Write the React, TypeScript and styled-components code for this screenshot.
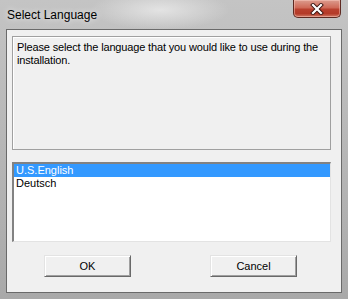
import React, { FC } from 'react';
import styled, { createGlobalStyle } from 'styled-components';

const Global = createGlobalStyle`
  *, *:before, *:after {
    box-sizing: border-box;
  }
  body {
    margin: 0;
    font-family: "Liberation Sans", Arial, sans-serif;
  }
`;

const Frame = styled.div`
  width: 348px;
  height: 299px;
  display: flex;
  flex-direction: column;
  background: linear-gradient(180deg, #c4c4c4 0%, #b9b9b9 40%, #a9a9a9 100%);
  position: relative;
  overflow: hidden;

  &:before {
    content: "";
    position: absolute;
    left: 90px;
    top: -10px;
    width: 140px;
    height: 40px;
    background: radial-gradient(ellipse at center, rgba(235, 235, 235, 0.8) 0%, rgba(235, 235, 235, 0) 70%);
  }
`;

const TitleBar = styled.div`
  height: 29px;
  display: flex;
  align-items: flex-start;
  justify-content: space-between;
  position: relative;
  z-index: 1;
`;

const Title = styled.div`
  font-family: "Liberation Sans", Arial, sans-serif;
  font-size: 12px;
  color: #000;
  padding: 8px 0 0 7px;
  text-shadow: 0 0 6px rgba(255, 255, 255, 0.9);
`;

const CloseButton = styled.div`
  width: 48px;
  height: 18px;
  margin-right: 7px;
  border: 1px solid #5e2a22;
  border-top: none;
  border-radius: 0 0 5px 5px;
  background: linear-gradient(180deg, #dc9c8e 0%, #cf6a58 45%, #b9402e 55%, #b43a28 80%, #d07a66 100%);
  box-shadow: inset 0 0 0 1px rgba(255, 210, 200, 0.45);
  display: flex;
  align-items: center;
  justify-content: center;
`;

const Client = styled.div`
  margin: 0 6px 0 6px;
  height: 264px;
  border: 1px solid #6a6a6a;
  background: #f0f0f0;
  display: flex;
  flex-direction: column;
  padding: 6px 10px 0 5px;
`;

const MessageBox = styled.div`
  height: 114px;
  border: 1px solid #a0a0a0;
  box-shadow: inset 1px 1px 0 #fff;
  background: #f0f0f0;
  padding: 4px 2px 0 4px;
  font-size: 11px;
  line-height: 13px;
  letter-spacing: -0.15px;
  color: #000;
`;

const ListBox = styled.div`
  margin-top: 12px;
  height: 80px;
  border: 1px solid #a0a0a0;
  border-top: 2px solid #828282;
  border-left: 2px solid #828282;
  border-right-color: #e3e3e3;
  border-bottom-color: #e3e3e3;
  background: #fff;
  display: flex;
  flex-direction: column;
`;

const ListItem = styled.div<{ $selected?: boolean }>`
  height: 13px;
  line-height: 13px;
  padding-left: 2px;
  font-size: 11px;
  color: ${p => (p.$selected ? '#fff' : '#000')};
  background: ${p => (p.$selected ? '#3399ff' : 'transparent')};
`;

const ButtonRow = styled.div`
  margin-top: 13px;
  display: flex;
  gap: 79px;
  padding-left: 32px;
`;

const Button = styled.div`
  width: 87px;
  height: 22px;
  border: 1px solid #696969;
  border-top-color: #e3e3e3;
  border-left-color: #e3e3e3;
  box-shadow: inset 1px 1px 0 #fff, inset -1px -1px 0 #a0a0a0;
  background: #f0f0f0;
  font-size: 11px;
  color: #000;
  display: flex;
  align-items: center;
  justify-content: center;
`;

const CloseIcon: FC = () => (
  <svg width="14" height="12" viewBox="0 0 14 12">
    <path d="M3 2 L11 10 M11 2 L3 10" stroke="#3b1410" strokeWidth="4" strokeLinecap="square" />
    <path d="M3 2 L11 10 M11 2 L3 10" stroke="#fff" strokeWidth="2.2" strokeLinecap="square" />
  </svg>
);

export default function App() {
  return (
    <>
      <Global />
      <Frame>
        <TitleBar>
          <Title>Select Language</Title>
          <CloseButton>
            <CloseIcon />
          </CloseButton>
        </TitleBar>
        <Client>
          <MessageBox>
            Please select the language that you would like to use during the installation.
          </MessageBox>
          <ListBox>
            <ListItem $selected>U.S.English</ListItem>
            <ListItem>Deutsch</ListItem>
          </ListBox>
          <ButtonRow>
            <Button>OK</Button>
            <Button>Cancel</Button>
          </ButtonRow>
        </Client>
      </Frame>
    </>
  );
}
